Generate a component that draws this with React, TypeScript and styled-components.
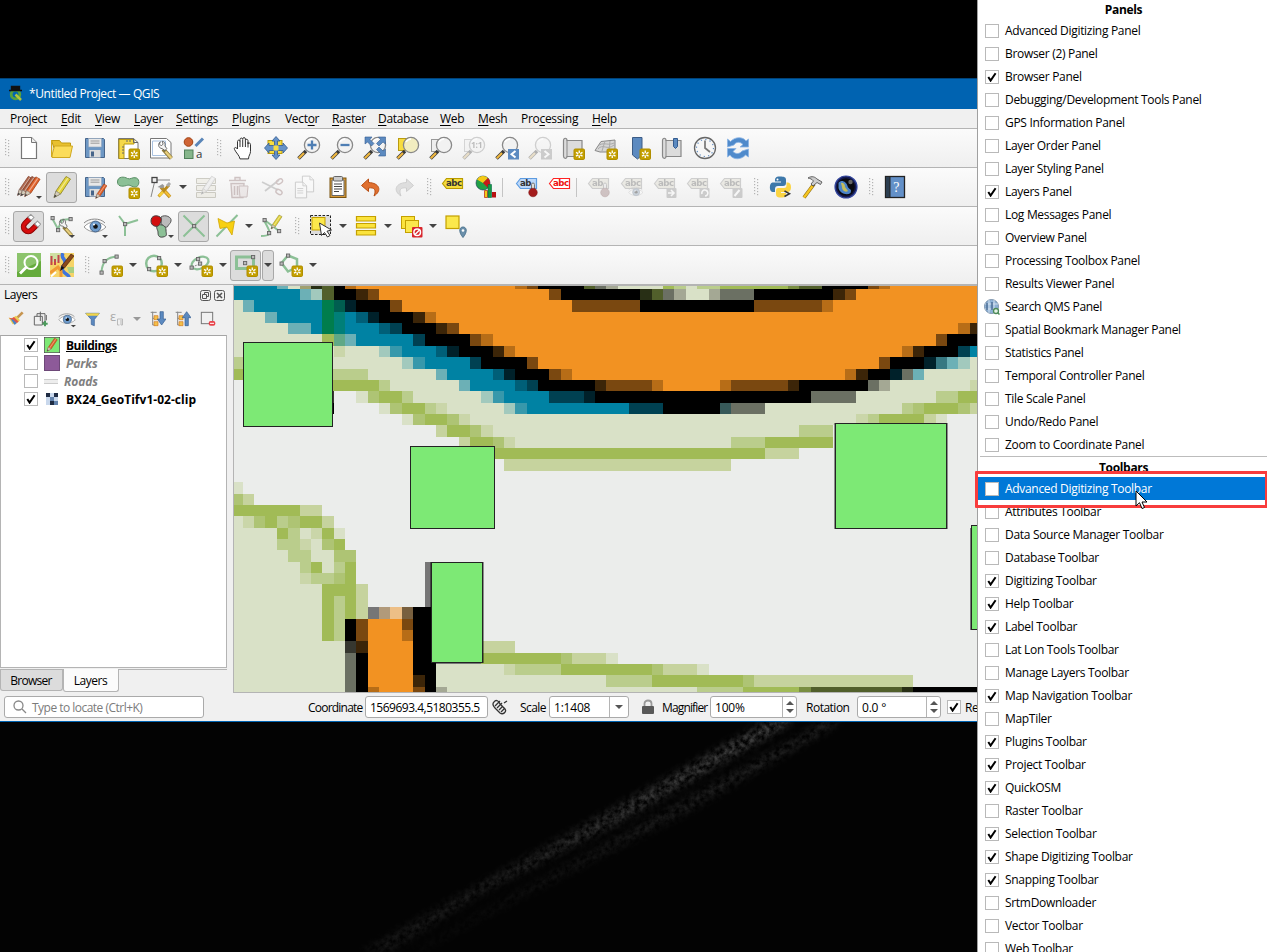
import React from "react";
import styled, { createGlobalStyle, css } from "styled-components";

const GlobalStyle = createGlobalStyle`
  * { box-sizing: border-box; }
  html, body { margin: 0; padding: 0; background: #000; overflow: hidden; }
  body { font-family: "Open Sans", "Noto Sans", sans-serif; font-size: 12px; letter-spacing: -0.31px; color: #000; }
  svg { display: block; flex: none; }
`;

/* ---------- layout ---------- */
const Desktop = styled.div`
  position: relative; width: 1267px; height: 952px; background: #000; overflow: hidden; padding-top: 78px;
`;
const Backdrop = styled.svg`position: absolute; left: 0; top: 721px;`;
const Window = styled.div`
  width: 1267px; height: 644px; background: #f0f0f0; display: flex; flex-direction: column;
  border-top: 1px solid #00437a; border-bottom: 1px solid #0063b1; position: relative;
`;
const TitleBar = styled.div`
  height: 30px; background: #0063b1; color: #fff; display: flex; align-items: center; padding: 0 0 2px 8px; gap: 6px; flex: none;
  letter-spacing: -0.4px;
`;
const MenuBar = styled.div`
  height: 19px; display: flex; align-items: center; padding-left: 10px; flex: none; background: #f0f0f0;
  u { text-underline-offset: 2px; text-decoration-thickness: 1px; }
`;
const MenuItem = styled.span<{ $w: number }>`width: ${p => p.$w}px; white-space: nowrap;`;
const ToolBar = styled.div`
  height: 39px; flex: none; border-top: 1px solid #b4b4b4; display: flex; align-items: center;
  background: linear-gradient(#fbfbfb, #efefef);
`;
const HandleBox = styled.div<{ $first?: boolean }>`
  width: ${p => (p.$first ? 12 : 16)}px; padding-left: ${p => (p.$first ? 5 : 7)}px; flex: none;
`;
const Slot = styled.div<{ $on?: boolean; $dim?: boolean }>`
  width: 31px; height: 31px; margin: 0 1px; flex: none; display: flex; align-items: center; justify-content: center;
  border: 1px solid transparent; border-radius: 3px; position: relative;
  ${p => p.$on && css`background: #dcdcdc; border-color: #a8a8a8;`}
  svg { ${p => p.$dim && css`opacity: 0.36; filter: saturate(0.5);`} }
`;
const Corner = styled.i`
  position: absolute; right: 1px; bottom: 3px; border: 3px solid transparent; border-top-color: #444; border-bottom: 0;
`;
const Arrow = styled.div<{ $on?: boolean }>`
  width: 12px; height: 31px; display: flex; align-items: center; justify-content: center; flex: none;
  border: 1px solid transparent; border-radius: 3px;
  ${p => p.$on && css`background: #dcdcdc; border-color: #a8a8a8;`}
  &::after { content: ""; border: 4px solid transparent; border-top-color: #444; border-bottom: 0; flex: none; }
`;
const Sep = styled.div<{ $w: number }>`width: ${p => p.$w}px; height: 19px; flex: none; border-left: 1px solid #c4c4c4;`;
const Main = styled.div`
  flex: 1; min-height: 0; display: flex; border-top: 1px solid #b4b4b4;
`;
const Dock = styled.div`width: 233px; display: flex; flex-direction: column; flex: none;`;
const DockTitle = styled.div`
  height: 20px; display: flex; align-items: center; padding: 0 8px 0 4px; gap: 3px;
  span { flex: 1; margin-top: -2px; letter-spacing: -0.5px; }
`;
const DockTools = styled.div`
  height: 30px; display: flex; align-items: center; padding: 0 0 2px 8px;
  svg { margin-right: 9px; }
`;
const Tree = styled.div`
  width: 227px; height: 333px; background: #fff; border: 1px solid #b4b4b4; border-top-color: #a5a5a5;
`;
const Layer = styled.div<{ $off?: boolean; $ls?: number }>`
  height: 18px; display: flex; align-items: center; padding-left: 23px; font-weight: 700; letter-spacing: ${p => p.$ls ?? -0.1}px;
  ${p => p.$off && css`color: #808080; font-style: italic;`}
`;
const Swatch = styled.span<{ $w: number }>`width: ${p => p.$w}px; margin-left: 6px; display: flex;`;
const Tabs = styled.div`
  width: 227px; height: 24px; margin-top: 1px; border-top: 1px solid #b4b4b4; display: flex; align-items: flex-start;
`;
const Tab = styled.div<{ $on?: boolean; $w: number }>`
  width: ${p => p.$w}px; height: ${p => (p.$on ? 23 : 21)}px; border: 1px solid #b4b4b4; border-top: 0;
  border-radius: 0 0 3px 3px; background: ${p => (p.$on ? "#fbfbfb" : "#dcdcdc")};
  display: flex; align-items: center; justify-content: center; margin-top: ${p => (p.$on ? -1 : 0)}px;
  padding-right: 1px; letter-spacing: ${p => (p.$on ? -0.5 : -0.75)}px;
`;
const MapBox = styled.div`flex: 1; border: 1px solid #b4b4b4; border-right: 0; border-top: 0; overflow: hidden; background: #ebedeb;`;
const Status = styled.div`
  height: 28px; flex: none; display: flex; align-items: center; padding: 0 0 0 4px;
`;
const Field = styled.div<{ $w: number; $muted?: boolean; $ls?: number }>`
  width: ${p => p.$w}px; height: 22px; background: #fff; border: 1px solid #aaa; border-radius: 3px; flex: none;
  display: flex; align-items: center; padding-left: ${p => (p.$muted ? 8 : 4)}px; gap: 5px;
  color: ${p => (p.$muted ? "#7b7b7b" : "#000")}; letter-spacing: ${p => p.$ls ?? -0.2}px; white-space: nowrap;
`;
const FieldEnd = styled.span<{ $w: number }>`
  margin-left: auto; width: ${p => p.$w}px; height: 20px; border-left: 1px solid #b4b4b4;
  display: flex; flex-direction: column; gap: 4px; align-items: center; justify-content: center;
  i { border: 4px solid transparent; }
  i.up { border-bottom-color: #555; border-top: 0; }
  i.dn { border-top-color: #555; border-bottom: 0; }
`;
const Label = styled.span<{ $w: number; $ml: number; $ls?: number }>`
  width: ${p => p.$w}px; margin-left: ${p => p.$ml}px; flex: none; white-space: nowrap; letter-spacing: ${p => p.$ls ?? -0.5}px;
`;

/* ---------- context menu ---------- */
const Menu = styled.div`
  position: absolute; left: 977px; top: 0; width: 290px; height: 952px; background: #fff; border-left: 1px solid #a0a0a0;
  overflow: hidden; display: flex; flex-direction: column;
`;
const MenuHead = styled.div<{ $sep?: boolean }>`
  height: ${p => (p.$sep ? 21 : 19)}px; flex: none; display: flex; align-items: center; justify-content: center;
  font-weight: 700; margin-left: 2px; ${p => p.$sep && css`border-top: 1px solid #bcbcbc;`}
`;
const MenuRow = styled.div<{ $on?: boolean }>`
  height: 23px; flex: none; display: flex; align-items: center; padding-left: 7px; gap: 6px; white-space: nowrap;
  ${p => p.$on && css`background: #0078d7; color: #fff;`}
`;
const Box = styled.span`
  width: 14px; height: 14px; border: 1px solid #b9b9b9; background: #fff; display: flex; align-items: center; justify-content: center; flex: none;
`;
const RedFrame = styled.div`
  position: absolute; left: 975px; top: 471px; width: 293px; height: 37px; border: 3px solid #f83c3c; border-radius: 1px;
`;
const Pointer = styled.svg`position: absolute; left: 1135px; top: 490px;`;

const Tick = () => (
  <svg width="10" height="10" viewBox="0 0 10 10"><path d="M1.3 5 3.6 8.6 8.6 1.2" fill="none" stroke="#000" strokeWidth="2" /></svg>
);
const Check = ({ on }: { on?: boolean }) => <Box>{on && <Tick />}</Box>;

/* ---------- icons ---------- */
const Ic = ({ children, s = 24 }: { children: React.ReactNode; s?: number }) => (
  <svg width={s} height={s} viewBox="0 0 24 24" fill="none">{children}</svg>
);
const New = ({ x = 12.5, y = 12.5 }: { x?: number; y?: number }) => (
  <g transform={`translate(${x} ${y})`}>
    <rect x=".5" y=".5" width="10.5" height="10.5" rx="1.2" fill="#c4a000" stroke="#b08e00" />
    <path d="M5.75 2v7.5M2.500 3.900l6.500 3.700M2.500 7.600l6.500-3.700" stroke="#fff" strokeWidth="1.300" />
    <circle cx="5.75" cy="5.75" r="1.2" fill="#c4a000" />
  </g>
);
const Lens = ({ fill = "#f2f2f2", cx = 15, cy = 9, r = 7.6 }: { fill?: string; cx?: number; cy?: number; r?: number }) => (
  <g>
    <path d="M1.5 22.5 9 15" stroke="#3a3a3a" strokeWidth="3.6" />
    <path d="M1.8 22.2 7 17" stroke="#f0b840" strokeWidth="2.2" />
    <circle cx={cx} cy={cy} r={r} fill={fill} stroke="#888" strokeWidth="1.3" />
    <path d="M10 6a6 6 0 0 1 5-3" stroke="#fff" strokeWidth="1.5" />
  </g>
);
const Nd = ({ x, y }: { x: number; y: number }) => (
  <rect x={x - 1.5} y={y - 1.5} width="3.2" height="3.2" fill="#bbb" stroke="#666" strokeWidth=".9" />
);
const Pencil = ({ c = "#e2d33a", d = "#8b8120", x = 0, y = 0, k = 1 }: { c?: string; d?: string; x?: number; y?: number; k?: number }) => (
  <g transform={`translate(${x} ${y}) scale(${k})`}>
    <path d="M4 22.5 6 16 16 1.5 20.5 4 10.5 19z" fill={c} stroke={d} strokeWidth=".8" />
    <path d="M8.2 17.3 18 3" stroke="#fff" strokeOpacity=".45" strokeWidth="1.3" />
    <path d="M4 22.5 6 16 10.5 19z" fill="#d5cdbb" stroke="#777" strokeWidth=".6" />
    <path d="M4 22.5 4.9 19.8 6.7 21z" fill="#333" />
  </g>
);
const Disk = () => (
  <g>
    <path d="M2.5 2.5h18l1 1v18h-19z" fill="#6d97c4" stroke="#47658a" />
    <rect x="5.5" y="2.5" width="13" height="8.5" fill="#e8e8e8" stroke="#8fa5bd" strokeWidth=".6" />
    <path d="M7.5 5h9M7.5 7.2h9" stroke="#999" />
    <rect x="6.5" y="14" width="11" height="7.5" fill="#ddd" />
    <rect x="8" y="15.5" width="3" height="5" fill="#47658a" />
  </g>
);
const Page = ({ x = 0, y = 0, k = 1, children }: { x?: number; y?: number; k?: number; children?: React.ReactNode }) => (
  <g transform={`translate(${x} ${y}) scale(${k})`}>
    <path d="M4.5 1.5h10l5 5v16h-15z" fill="#fff" stroke="#777" strokeWidth="1.2" />
    <path d="M14.5 1.5v5h5" fill="#eee" stroke="#777" />
    {children}
  </g>
);
const Tag = ({ t = "abc", f = "#f4dc3c", s = "#b99b00", c = "#333" }: { t?: string; f?: string; s?: string; c?: string }) => (
  <g>
    <path d="M1.5 8.5 5.500 3.500h16v10h-16z" fill={f} stroke={s} strokeWidth="1.2" />
    <text x="5" y="11.400" fontSize="8.6" fontWeight="700" fill={c} fontFamily="DejaVu Sans" letterSpacing="-.5">{t}</text>
  </g>
);
const Pin = ({ c = "#a41c1c" }: { c?: string }) => (
  <g><rect x="16.500" y="8" width="3" height="9" rx="1.5" fill="#ddd" stroke="#777" /><circle cx="18" cy="17.500" r="4.3" fill={c} stroke="#791414" strokeWidth=".5" /></g>
);
const Gray = ({ children }: { children: React.ReactNode }) => (
  <g><rect x="13.5" y="13" width="10" height="10" rx="1" fill="#888" />{children}</g>
);
const GEdge = "#8cc096";
const Eye = () => (
  <g>
    <path d="M1 13C6 6.5 17 6 23 13 17 19.500 7 19.500 1 13z" fill="#fff" stroke="#999" />
    <path d="M1 9C6 4 17 3.500 22 9" stroke="#888" />
    <circle cx="12.500" cy="12.500" r="5.400" fill="#6f9ccc" stroke="#47658a" />
    <circle cx="12.500" cy="12.500" r="2.300" fill="#111" /><circle cx="11" cy="10.500" r="1" fill="#fff" />
  </g>
);
const Wrench = () => (
  <g>
    <path d="m11 11 9 10" stroke="#8d7a3c" strokeWidth="4.400" /><path d="m13.500 13.500 6.500 7.300" stroke="#e8cf7c" strokeWidth="2.500" />
    <path d="M8 3C5 5 5.500 10 10 10.500l3 2 2-2-2-3c1-3-1-5-3-5l1 3-2 2-2-2z" fill="#f4f4f4" stroke="#555" strokeWidth=".9" />
  </g>
);

const icons: Record<string, React.ReactNode> = {
  page: <Page />,
  folder: <g><path d="M1.500 4.500h8l2 2.500h9v5H4z" fill="#e8c02e" stroke="#c09a10" /><path d="M1.500 4.500V21l3-11h18L20 21.500H2z" fill="#fbdc5a" stroke="#d0a820" /></g>,
  disk: <Disk />,
  layout: <g><path d="M2.500 2.500h15l4.500 4v16h-19.500z" fill="#fff" stroke="#777" /><path d="M3 3.500h15v4.500h-10v14.500h-5z" fill="#f5d84a" stroke="#b99a10" /><path d="M17.500 2.500v4H22M6 11h2M6 14h2M6 17h2M11 4v2M14 4v2" stroke="#666" /><New /></g>,
  layoutmgr: <g><path d="M1.500 2.500h16l4.500 4v15.500H1.500z" fill="#fff" stroke="#777" /><path d="M3.500 5h13v14.500h-13z" stroke="#a9c2e0" /><g transform="translate(4 3) scale(.92)"><Wrench /></g></g>,
  style: <g><circle cx="6.500" cy="6" r="4.300" fill="#cf6434" stroke="#a04010" /><path d="M13.500 10 21 2.500" stroke="#5a86b8" strokeWidth="3" /><rect x="2.500" y="14" width="8.500" height="8.500" fill="#86b68b" stroke="#50805a" /><text x="14" y="21.500" fontSize="11.500" fill="#333" fontFamily="Open Sans">a</text></g>,
  hand: <path d="M6.500 13V5.500c0-1.800 2.300-1.800 2.500 0V3.500c0-1.900 2.700-1.900 2.700 0V3c0-1.900 2.700-1.900 2.700 0v1.500c.2-1.700 2.500-1.600 2.600.2V8c.4-1.500 2.500-1.200 2.500.4v7c0 3-2 4-2 7.500H9c-.5-3.500-4-6-5.500-9.500-.8-2 1.500-2.600 3-.4zM9 5.500V11M11.700 4v7M14.400 4.500V11M17 6v5.500" fill="#fff" stroke="#333" strokeWidth="1" />,
  pan: <g><rect x="4" y="4.500" width="14" height="13" fill="#f7dc3f" stroke="#b99b10" /><path d="m12 .5 4 4.500h-2.500v4.500H19V7l4.500 5-4.500 5v-2.500h-5.500V19H16l-4 4.500L8 19h2.500v-4.500H5V17L.5 12 5 7v2.500h5.500V5H8z" fill="#6592c8" stroke="#345c90" strokeWidth=".8" /><rect x="9.500" y="9.500" width="5" height="5" fill="#f7dc3f" /></g>,
  zoomin: <g><Lens /><path d="M15 4.500v9M10.500 9h9" stroke="#4e7eb4" strokeWidth="2.300" /></g>,
  zoomout: <g><Lens /><path d="M10.500 9h9" stroke="#4e7eb4" strokeWidth="2.300" /></g>,
  zoomfull: <g><Lens /><path d="M2 1h7L7 3.500l4 4L8.500 10l-4-4L2 8zM22.500 1h-7l2 2.500-4 4L16 10l4-4 2.500 2zM22.500 20h-7l2-2.500-4-4L16 11l4 4 2.500-2z" fill="#5c8ac0" stroke="#345c90" strokeWidth=".6" /></g>,
  zoomsel: <g><rect x="2.500" y="2.500" width="13" height="12" fill="#f7dc3f" stroke="#b99b10" /><Lens fill="#f2edc0" /></g>,
  zoomlayer: <g><rect x="2.500" y="3.500" width="12" height="12" fill="#eee" stroke="#999" /><Lens /></g>,
  zoom11: <g><rect x="2.500" y="3.500" width="12" height="12" fill="#eee" stroke="#999" /><Lens /><text x="9" y="12" fontSize="8.500" fontWeight="700" fill="#555" fontFamily="Open Sans">1:1</text></g>,
  zoomlast: <g><Lens /><rect x="13" y="13" width="11" height="10.500" fill="#5c8ac0" /><path d="m20.500 15-4 3.300 4 3.300" stroke="#fff" strokeWidth="2" /></g>,
  zoomnext: <g><Lens /><rect x="13" y="13" width="11" height="10.500" fill="#888" /><path d="m16.500 15 4 3.300-4 3.300" stroke="#fff" strokeWidth="2" /></g>,
  mapview: <g><path d="M2.500 20V4.500c0-3 3.500-3 3.500 0h15v16H6c0 2.500-3.500 2.500-3.500-.5z" fill="#dcdcdc" stroke="#888" strokeWidth="1.200" /><path d="M6 4.500v16" stroke="#888" /><New /></g>,
  view3d: <g><path d="M1 14.500 7 5.500l14-1.500v9l-3 3H6z" fill="#d6d6d6" stroke="#888" /><path d="M4 13c5-6 9 2 16-4M5 9c6-3 9 1 15-2M11 5 8 15M16 5l-1 10" stroke="#aaa" /><New /></g>,
  newbm: <g><path d="M5.500 1.500h9.500v17.500l-4.500 4-5-4z" fill="#5c8ac0" stroke="#3c5c86" /><New /></g>,
  showbm: <g><path d="M2.500 20V4.500c0-3 3.500-3 3.500 0h15v16H6c0 2.500-3.500 2.500-3.500-.5z" fill="#dcdcdc" stroke="#888" strokeWidth="1.200" /><path d="M6 4.500v16" stroke="#888" /><path d="M13.500 2.500h4v8l-2 2-2-2z" fill="#5c8ac0" stroke="#345c90" /></g>,
  clock: <g><circle cx="12" cy="12" r="10.500" fill="#f6f6f6" stroke="#666" strokeWidth="1.300" /><circle cx="12" cy="12" r="8.500" stroke="#5c8ac0" strokeWidth="1.200" strokeDasharray="1.200 3.250" /><path d="M12 4.500V12l5 4" stroke="#777" strokeWidth="1.700" /></g>,
  refresh: <g><path d="M1.500 11V3l3 2.500C9 .5 17 .5 20 5l2.500-2v8H14l3-2.500c-3-3-7-3-9 .5zM22.500 13v8l-3-2C15 24 7 24 4 19l-2.500 2v-8.500H10l-3 3c3 3 7 2.500 9-.5z" fill="#4f8acb" stroke="#8ab4e4" strokeWidth=".8" /></g>,
  pencils: <g><Pencil c="#b06a50" d="#80402c" x={-3} y={0} k={0.9} /><Pencil c="#a85c40" d="#7a3c28" x={0} k={0.93} /><Pencil c="#e0622c" d="#a03c10" x={4} y={0.5} k={0.93} /></g>,
  pencil: <Pencil />,
  savepen: <g><Disk /><Pencil c="#e0622c" d="#a03c10" x={10} y={8} k={0.68} /></g>,
  addpoly: <g><path d="M1.500 7c0-6 7-5.500 10-3.500 3 1.500 5-2 9-.5 3.500 1.500 3 8.500-1 9-4 .3-5-3-9-1.500-5 1.500-9 .5-9-3.500z" fill="#8cc096" stroke="#5a8f66" /><New /></g>,
  vertex: <g><path d="M2 22 6 5h15" stroke="#888" /><rect x="3" y="2.500" width="5" height="5" fill="#eee" stroke="#444" strokeWidth="1.300" /><path d="m12 12 9 10" stroke="#b98a1c" strokeWidth="3.400" /><path d="m14 14.500 7 7" stroke="#f3bd35" strokeWidth="2.200" /><path d="M9.500 21.500 20 10" stroke="#b98a1c" strokeWidth="2.800" /><path d="m10 21 4-4" stroke="#f6cf3c" strokeWidth="2.600" /><path d="m8.500 12 5-3 2 2-2 2.500z" fill="#999" /><path d="m18 11 3-3" stroke="#aaa" strokeWidth="3" /></g>,
  modify: <g><path d="M2.500 3.500h19v5h-19zM2.500 10.500h19v5h-19zM2.500 17.500h19v5h-19z" fill="#e9e3c4" stroke="#8a8457" /><Pencil c="#ddd" d="#777" x={4} k={0.85} /></g>,
  trash: <g><path d="M2 5.500h17M8 5V2.500h5V5M4 8.500h13l-1 14H5zM7.500 11v9M10.500 11v9M13.500 11v9" stroke="#a06060" strokeWidth="1.400" fill="#ecd4d4" /><path d="M12 11h9l-1 11h-7z" fill="#e8d0d0" stroke="#a06060" /></g>,
  cut: <g><path d="m2 7 16 8M5 16 19 5" stroke="#888" strokeWidth="1.800" /><ellipse cx="19.500" cy="6.500" rx="3.300" ry="2.200" stroke="#a66" strokeWidth="1.400" transform="rotate(-30 19.500 6.500)" /><ellipse cx="19" cy="17" rx="3.300" ry="2.200" stroke="#a66" strokeWidth="1.400" transform="rotate(30 19 17)" /></g>,
  copy: <g><Page x={6} y={0} k={0.75} /><Page x={-1} y={6} k={0.75}><path d="M7 10h8M7 13h8M7 16h8" stroke="#777" /></Page></g>,
  paste: <g><rect x="4" y="3" width="16" height="19.500" fill="#d79a3a" stroke="#7a5410" /><path d="M6 5h12v15.500H6z" fill="#fff" stroke="#666" /><rect x="7.500" y="1.500" width="9" height="4.500" rx="1" fill="#ccc" stroke="#666" /><path d="M8 9h8M8 11.500h8M8 14h8M8 16.500h5" stroke="#444" /></g>,
  undo: <path d="M9.500 4 2.500 10.500l7 6V13c6-1 8 2 5.500 8 8-5 6-13-5.500-13.500z" fill="#e07030" stroke="#b84e14" />,
  redo: <path d="M14.500 4 21.500 10.500l-7 6V13c-6-1-8 2-5.500 8-8-5-6-13 5.500-13.500z" fill="#b5b5b5" stroke="#888" />,
  label: <Tag />,
  diagram: <g><circle cx="9" cy="8" r="7" fill="#21a046" stroke="#135" strokeWidth=".6" /><path d="M9 8 3 4.500A7 7 0 0 1 14 3z" fill="#f6c915" /><path d="M9 8l5-5a7 7 0 0 1 0 10z" fill="#c8181a" /><path d="M10.500 15.500h3v7h-3z" fill="#f6c915" stroke="#a00" strokeWidth=".6" /><path d="M14 9.500h3.500v13H14z" fill="#159a45" stroke="#064" strokeWidth=".6" /><path d="M18 17h4v5.500h-4z" fill="#b81212" /></g>,
  labpin: <g><Tag t="ab" f="#bcd8fb" s="#5c9be0" /><Pin /></g>,
  labred: <Tag f="#fff" s="#f22" c="#e11" />,
  gpin: <g><Tag t="ab" f="#d8d4b4" s="#888" c="#555" /><Pin c="#a66" /></g>,
  geye: <g><Tag f="#d8d4b4" s="#888" c="#555" /><g transform="translate(8 9) scale(.65)"><Eye /></g></g>,
  gmove: <g><Tag f="#d8d4b4" s="#888" c="#555" /><Gray><path d="M15 18h6m-3-3 3 3-3 3" stroke="#fff" strokeWidth="1.600" /></Gray></g>,
  grot: <g><Tag f="#d8d4b4" s="#888" c="#555" /><Gray><path d="M16 19a3 3 0 1 1 3 2" stroke="#fff" strokeWidth="1.600" /></Gray></g>,
  gedit: <g><Tag f="#d8d4b4" s="#888" c="#555" /><Gray><path d="m15.500 21 5-6" stroke="#fff" strokeWidth="2" /></Gray></g>,
  python: <g><path d="M12 1.500c-5 0-5 2-5 5h6v1H4.500C1 7.500 1 17 4.500 17H7v-3c0-2 1-3 3-3h5c2 0 3-1 3-3V5c0-3-2-3.500-6-3.500z" fill="#3d78aa" /><path d="M18.500 7.500H20c4 0 4 9.500 0 9.500h-7v1h5c0 4-1 4.500-5 4.500-5 0-5-2-5-4.500 0-4 0-5 3-5h5c2 0 2.500-1 2.500-3z" fill="#fbd443" /><circle cx="9.500" cy="4.500" r="1" fill="#fff" /><path d="m16.500 16 5 2.700-5 2.800" stroke="#333" strokeWidth="1.500" /></g>,
  hammer: <g><path d="M3 22.500 13 9" stroke="#8b6a10" strokeWidth="3.600" /><path d="M3 22.500 11.500 11" stroke="#f5c521" strokeWidth="2.400" /><path d="M7 3c4-2.500 7-1 9 1l5 3-1.500 2.500-3.500-2-4 3.500-2-2 2.500-3C11 4 9 3.500 7 3z" fill="#ccc" stroke="#555" strokeWidth=".9" /></g>,
  globe: <g><circle cx="12" cy="12" r="11" fill="#141a50" stroke="#34479e" strokeWidth="1.200" /><circle cx="12" cy="12" r="8.800" fill="#0a0a10" /><path d="M4.500 8c3-4 8-1 9 3s5 2 3 7c-4 3-11 0-12-5z" fill="#4b83c8" /><path d="M7 8c3-1 4 2 4 4l3 4c-3 2-6-1-6-4z" fill="#c4bd5c" /><circle cx="16.500" cy="7" r="2.200" fill="#666" /></g>,
  help: <g><rect x="2.500" y="1.500" width="19" height="21" fill="#6390c8" stroke="#222" strokeWidth="1.300" /><path d="M2.500 1.500H7v21H2.500z" fill="#2c3e50" stroke="#222" /><text x="10.200" y="17" fontSize="14" fill="#fff" fontFamily="Liberation Serif">?</text></g>,
  magnet: <g transform="rotate(45 12 12)"><path d="M5 6v7a7 7 0 0 0 14 0V6h-4.500v7a2.500 2.500 0 0 1-5 0V6z" fill="#d60c0c" stroke="#8e0404" /><path d="M5 2.500h4.500v4H5zM14.500 2.500H19v4h-4.500z" fill="#fff" stroke="#999" /></g>,
  snaptool: <g><path d="M2 4 8 15 12 6 21 5" stroke={GEdge} strokeWidth="2" /><Nd x={2.500} y={4} /><Nd x={8} y={16} /><Nd x={20.500} y={5} /><g transform="translate(4 3) scale(.88)"><Wrench /></g></g>,
  eye: <Eye />,
  topo: <g><path d="M3 2 9 10 22 6M9 10v12" stroke={GEdge} strokeWidth="2" /><Nd x={9} y={10} /></g>,
  overlap: <g><path d="M12 3c4-3 11 0 10 4s-2 2-3 5-7 0-7-4z" fill="#bbb" stroke="#555" /><path d="M9 11c4-1 8 1 8 5s2 6-3 7-5-3-5-5-3-5 0-7z" fill="#8cc096" stroke="#444" /><path d="M2 7c0-6 6-6 9-4s0 8-2 9-7 0-7-5z" fill="#d20e0e" stroke="#444" /></g>,
  cross: <g><path d="M1.500 1.500 22.500 22.500M22.500 1.500 1.500 22.500" stroke={GEdge} strokeWidth="2" /><Nd x={12} y={12} /></g>,
  trace: <g><path d="M22.500 1 1.500 22.500" stroke={GEdge} strokeWidth="2" /><path d="m3 4.500 9 4.500 7.500-2-2.500 14-5-8-7 1.500z" fill="#f7d012" stroke="#d0a400" strokeWidth=".8" /></g>,
  tracepen: <g><path d="M1 22c9 0 10-2 7-8S3.500 6 4.500 6L19 17" stroke={GEdge} strokeWidth="2" /><Nd x={4.500} y={6} /><Nd x={19} y={17} /><Nd x={9} y={19} /><Pencil x={8.500} y={0} k={0.66} /></g>,
  selrect: <g><rect x="1.500" y="1.500" width="20" height="19" fill="#ddd" stroke="#222" strokeDasharray="2.500 1.500" /><rect x="3" y="3.500" width="13" height="12.500" fill="#fbe84c" stroke="#c4a000" /><path d="m10.500 9 12 7-4.500 1.200 3 4.300-2.500 1.500-3-4.500-3 3z" fill="#fff" stroke="#333" /></g>,
  seltable: <path d="M2.500 2.500h19v4.500h-19zM2.500 9.500h19V14h-19zM2.500 16.500h19V21h-19z" fill="#fbe33c" stroke="#c4a000" strokeWidth="1.200" />,
  desel: <g><rect x="2.500" y="2.500" width="13" height="12" fill="#fbe33c" stroke="#c4a000" /><rect x="6.500" y="6.500" width="13" height="12" fill="#fbe84c" stroke="#c4a000" /><rect x="13" y="13" width="10.500" height="10.500" rx="1" fill="#d8262c" /><circle cx="18.200" cy="18.200" r="3.300" stroke="#fff" strokeWidth="1.500" /><path d="m16 20.500 4.500-4.500" stroke="#fff" strokeWidth="1.500" /></g>,
  selloc: <g><rect x="2" y="2" width="13" height="12.500" fill="#fbe84c" stroke="#c4a000" strokeWidth="1.200" /><path d="M19 23.500c-5-6-3.500-10.500 0-10.500s5 4.500 0 10.500z" fill="#6b90ab" stroke="#4d7590" /><circle cx="19" cy="16.500" r="1.300" fill="#fff" /></g>,
  qosm: <g><rect width="24" height="24" fill="#65ab3c" /><path d="M0 0h24v8L0 19z" fill="#8cc46c" /><circle cx="14" cy="9.500" r="6.500" stroke="#fff" strokeWidth="2" /><path d="M9.500 14 3 20.500" stroke="#fff" strokeWidth="2.800" /></g>,
  osmedit: <g><rect width="24" height="24" fill="#f6d468" /><path d="M0 0h10v9H0z" fill="#cfe0a2" /><path d="M13 0c-3 5 3 6 2 10s-5 4-2 8 6 4 6 6" stroke="#3f74dc" strokeWidth="3.500" /><path d="M1.500 3v9M5 6v6M8.500 2v8" stroke="#c2464a" strokeWidth="2" /><path d="m0 20 8-6 3 4v6" stroke="#f09a34" strokeWidth="3" /><path d="M1 23.500 6 19" stroke="#fff" strokeWidth="2" /><path d="M17 14h7v6h-5z" fill="#a9cf80" /><path d="m11.500 13 9.500-12 3 2-9.500 12z" fill="#8a4a1c" stroke="#4c2408" strokeWidth=".7" /><path d="m11.500 13 3 2-4.500 3z" fill="#111" /></g>,
  arc: <g><path d="M2.500 19C3 10 8 4 18 3.500" stroke={GEdge} strokeWidth="2" /><Nd x={2.500} y={19.500} /><Nd x={5.500} y={8} /><Nd x={17.500} y={3.500} /><New /></g>,
  circ: <g><circle cx="10" cy="10.500" r="7.800" stroke={GEdge} strokeWidth="2.500" /><Nd x={15} y={5} /><Nd x={5} y={16} /><New /></g>,
  ellip: <g><ellipse cx="11" cy="10" rx="9" ry="5.500" stroke={GEdge} strokeWidth="2.300" transform="rotate(-25 11 10)" /><path d="m3 14 8-3-2-6" stroke="#888" strokeDasharray="2 1" /><Nd x={2.500} y={14.500} /><Nd x={11} y={10.500} /><Nd x={9} y={6} /><New /></g>,
  rect: <g><rect x="2.500" y="4" width="17" height="11.500" stroke={GEdge} strokeWidth="3" /><Nd x={11} y={10} /><Nd x={19} y={4} /><New /></g>,
  polyg: <g><path d="M9 2.500 18 6v8l-9 4.500L2.500 10z" stroke={GEdge} strokeWidth="2.500" /><Nd x={9} y={2.500} /><Nd x={2.500} y={10.500} /><New /></g>,
};

const B = ({ n, on, dim, dd }: { n: string; on?: boolean; dim?: boolean; dd?: boolean }) => (
  <Slot $on={on} $dim={dim}><Ic>{icons[n]}</Ic>{dd && <Corner />}</Slot>
);
const H = ({ first }: { first?: boolean }) => (
  <HandleBox $first={first}>
    <svg width="6" height="18"><g fill="#b4b4b4">{[0, 3, 6, 9, 12, 15].map(y => <g key={y}><rect y={y} width="1.200" height="1.200" /><rect x="3" y={y + 1} width="1.200" height="1.200" /></g>)}</g></svg>
  </HandleBox>
);

/* ---------- raster map ---------- */
const palette: Record<string, string> = {
  T: "#0082a3", K: "#000", O: "#f29222", G: "#d9e1c7", D: "#a1bb56", W: "#ebedeb", B: "#7a4810", b: "#3c2508", o: "#b76d17",
  M: "#bacd8c", N: "#c6d39e", m: "#aec474", g: "#cad6a9", S: "#6cb0b6", s: "#a2c9bd", t: "#3798ab", U: "#005f78", u: "#004152",
  v: "#00212a", H: "#007d4c", h: "#005e50", Q: "#007f78", q: "#60a886", R: "#6b7063", r: "#a4a894", E: "#515f2b", e: "#282f15",
  F: "#798e41", f: "#a0a070", p: "#377882", y: "#375959", x: "#767676", a: "#b19a7a", c: "#edbf86", d: "#78603f", j: "#36372f",
};
// Each row lists a colour key followed by the column at which its run ends.
const raster = [
  "T3 S4 G5 f6 e7 E8 K9 o10 O24 o25 B26 K30 E31 R32 r33 G37 D38 M39 G40 M42 D48 F49 E51 K55 B56 o57 O66",
  "T5 S6 s7 E8 K10 b11 B12 O27 B28 K35 e36 E37 R38 r39 G41 r42 R45 K52 b53 B54 O66",
  "G0 S1 T7 H8 h9 v10 K13 B14 O29 B35 K45 B51 o52 O66",
  "G2 S3 T7 H8 Q9 T10 U11 v12 K15 b16 o17 O66",
  "G4 S6 T7 H8 Q9 T12 U13 u14 K17 b18 B19 O63 o64 b66",
  "G7 D8 q9 S10 T15 u16 K20 B21 o22 O61 B62 K66",
  "G8 g9 G12 s13 t14 T17 U18 v19 K22 b23 o24 O58 o59 b60 K63 u64 T66",
  "M0 G14 s15 t16 T20 u21 K25 B26 O56 B57 K60 v61 p62 S63 s64 G66",
  "D0 M11 G17 S18 T22 U23 v24 K27 B28 o29 O53 o54 b55 K57 v58 R59 S60 G66",
  "W0 D12 M13 G19 S20 T24 U25 u26 K31 b32 B36 o37 O42 o43 B48 b49 K55 R56 r57 G64 g66",
  "W10 G11 m12 D14 M15 G21 s22 t23 T27 u30 v31 K50 R54 G61 M63 D66",
  "W12 G13 m14 D16 M17 g18 G23 s24 t25 T34 u37 K42 y43 R46 G58 M59 m60 D63 m64 N66",
  "W14 G15 m16 D18 m19 g20 G54 g55 M56 D60 N61 G62 W66",
  "W17 N18 D20 m21 g22 G49 M52 W66",
  "W19 N20 D22 m23 g24 G43 M46 D52 W66",
  "W22 D46 N49 W66",
  "W23 N43 W66",
  "W66",
  "G0 W66",
  "m0 N1 W66",
  "D5 N7 W66",
  "G0 g1 m2 D3 M4 m5 D7 N8 W66",
  "G3 D4 M5 G6 g7 D8 G9 W66",
  "G3 M5 g6 G7 m8 D9 W66",
  "G4 M6 G8 m10 W66",
  "G5 M6 D7 G8 M9 D10 W16 x17 W66",
  "G5 g6 M8 m9 D10 W16 x17 W66",
  "G7 D10 N11 W16 x17 W66",
  "G7 D8 M9 D10 N11 W16 x17 W66",
  "G7 D8 M9 D10 N11 x12 a13 c14 d15 K17 W66",
  "G7 D8 M9 K10 B11 O14 B15 K17 W66",
  "G7 D8 M9 K10 B11 O14 o15 K17 W66",
  "G9 j10 b11 O15 K17 N24 W66",
  "G9 R10 K11 O15 K17 D28 m29 N32 G33 W66",
  "G9 R10 K11 O15 K17 G23 g24 M28 D36 m37 N40 G41 W66",
  "G9 R10 K11 O15 b16 K17 G32 M36 D44 m45 N59 W66",
  "G9 R10 K11 o12 O15 B16 K17 r18 G40 M44 D49 F50 E58 e59 K66",
];
const rowTop = [286, 289, 300, 312, 323, 334, 346, 357, 369, 380, 391, 403, 414, 425, 437, 448, 459, 471, 482, 494, 505, 516, 528, 539, 550, 562, 573, 584, 596, 607, 619, 630, 641, 653, 664, 675, 687, 692];
const colX = (c: number) => (c < 0 ? 234 : Math.round(242.75 + 11.36 * c));

const RasterMap = () => (
  <svg width="760" height="407" viewBox="234 285 760 407" shapeRendering="crispEdges">
    <rect x="234" y="285" width="760" height="1" fill="#b4b4b4" />
    {raster.map((line, r) => {
      let c = -1;
      return line.split(" ").map((run, i) => {
        const end = parseInt(run.slice(1), 10);
        const x = colX(c);
        c = end;
        return <rect key={`${r}-${i}`} x={x} y={rowTop[r]} width={colX(end) - x} height={rowTop[r + 1] - rowTop[r]} fill={palette[run[0]]} />;
      });
    })}
    <path d="M333.500 391v12" stroke="#3a3a30" />
    <path d="M333.500 403v11" stroke="#000" />
    <path d="M970.500 528v102M436 663.500h45" stroke="#777" />
    {[[243, 342, 90, 85], [410, 446, 85, 83], [835, 423, 112, 106], [431, 562, 52, 101], [971, 525, 60, 105]].map(([x, y, w, h]) => (
      <rect key={x} x={x + 0.5} y={y + 0.5} width={w - 1} height={h - 1} fill="#7de975" stroke="#232323" />
    ))}
    <path d="M834.500 423v106M947.500 423v106M483.500 562v101M430.500 562v101" stroke="#000" strokeOpacity=".4" />
  </svg>
);

/* ---------- data ---------- */
const menus: [string, string, string, number][] = [
  ["Pro", "j", "ect", 51], ["", "E", "dit", 34], ["", "V", "iew", 39], ["", "L", "ayer", 42], ["", "S", "ettings", 56], ["", "P", "lugins", 53],
  ["Vect", "o", "r", 47], ["", "R", "aster", 46], ["", "D", "atabase", 62], ["", "W", "eb", 38], ["", "M", "esh", 43], ["Pro", "c", "essing", 71], ["", "H", "elp", 40],
];
const panels = ["Advanced Digitizing Panel", "Browser (2) Panel", "+Browser Panel", "Debugging/Development Tools Panel", "GPS Information Panel", "Layer Order Panel", "Layer Styling Panel", "+Layers Panel", "Log Messages Panel", "Overview Panel", "Processing Toolbox Panel", "Results Viewer Panel", "@Search QMS Panel", "Spatial Bookmark Manager Panel", "Statistics Panel", "Temporal Controller Panel", "Tile Scale Panel", "Undo/Redo Panel", "Zoom to Coordinate Panel"];
const toolbars = ["*Advanced Digitizing Toolbar", "Attributes Toolbar", "Data Source Manager Toolbar", "Database Toolbar", "+Digitizing Toolbar", "+Help Toolbar", "+Label Toolbar", "Lat Lon Tools Toolbar", "Manage Layers Toolbar", "+Map Navigation Toolbar", "MapTiler", "+Plugins Toolbar", "+Project Toolbar", "+QuickOSM", "Raster Toolbar", "+Selection Toolbar", "+Shape Digitizing Toolbar", "+Snapping Toolbar", "SrtmDownloader", "Vector Toolbar", "Web Toolbar"];

const QmsSvg = styled.svg`margin: 0 -1px;`;
const QmsIcon = () => (
  <QmsSvg width="16" height="16" viewBox="0 0 16 16">
    <circle cx="7.500" cy="7.500" r="7" fill="#8fb2d6" stroke="#667f99" strokeWidth=".8" />
    <path d="M5 1v13M10 1v13M1 5h13M1 10h13" stroke="#dfe9f3" strokeWidth=".8" /><path d="M3 4v7M8 3v8" stroke="#4d6f96" strokeWidth="1.500" />
    <circle cx="12" cy="12" r="2.500" fill="#e6f3e6" stroke="#4c8a58" strokeWidth="1.300" /><path d="m13.500 13.500 2 2" stroke="#4c8a58" strokeWidth="1.500" />
  </QmsSvg>
);
const Entry = ({ text }: { text: string }) => {
  const flag = "+@*".includes(text[0]) ? text[0] : "";
  return (
    <MenuRow $on={flag === "*"}>
      {flag === "@" ? <QmsIcon /> : <Check on={flag === "+"} />}
      <span>{flag ? text.slice(1) : text}</span>
    </MenuRow>
  );
};

const StatusIcon = styled.svg<{ $ml: number }>`margin-left: ${p => p.$ml}px;`;

export default function App() {
  return (
    <Desktop>
      <GlobalStyle />
      <Backdrop width="977" height="231" viewBox="0 721 977 231">
        <defs>
          <filter id="grain" x="-10%" y="-10%" width="120%" height="120%">
            <feGaussianBlur stdDeviation="4" result="soft" />
            <feTurbulence type="fractalNoise" baseFrequency=".2" numOctaves="3" seed="4" />
            <feColorMatrix values="0 0 0 0 .45 0 0 0 0 .45 0 0 0 0 .45 2 0 0 0 -.5" />
            <feComposite in2="soft" operator="in" />
          </filter>
          <linearGradient id="fade" x1="1" y1="0" x2="0" y2="1"><stop stopColor="#fff" stopOpacity=".42" /><stop offset="1" stopColor="#fff" stopOpacity=".1" /></linearGradient>
        </defs>
        <rect y="721" width="977" height="231" fill="#030303" />
        <g filter="url(#grain)" fill="url(#fade)">
          <path d="M768 721h26L620 822 480 894 390 952h-30l110-62z" />
          <path d="M826 721h16L680 816 520 898l-100 54h-8l102-58z" opacity=".55" />
        </g>
      </Backdrop>
      <Window>
        <TitleBar>
          <svg width="15" height="16" viewBox="0 0 15 16" fill="none"><circle cx="7.500" cy="9.500" r="4.300" stroke="#58a13c" strokeWidth="2.800" /><path d="m7.500 9.500 5.500 5.500" stroke="#b3c639" strokeWidth="2.500" /><path d="M1 5.500h13M3.500 5V1.500h8V5" fill="#111" stroke="#111" strokeWidth="1.400" /></svg>
          <span>*Untitled Project — QGIS</span>
        </TitleBar>
        <MenuBar>{menus.map(([a, u, z, w]) => <MenuItem key={a + u + z} $w={w}>{a}<u>{u}</u>{z}</MenuItem>)}</MenuBar>
        <ToolBar>
          <H first />{["page", "folder", "disk", "layout", "layoutmgr", "style"].map(n => <B key={n} n={n} />)}
          <H />{["hand", "pan", "zoomin", "zoomout", "zoomfull", "zoomsel", "zoomlayer"].map(n => <B key={n} n={n} />)}
          <B n="zoom11" dim /><B n="zoomlast" /><B n="zoomnext" dim />
          {["mapview", "view3d", "newbm", "showbm", "clock", "refresh"].map(n => <B key={n} n={n} />)}
        </ToolBar>
        <ToolBar>
          <H first /><B n="pencils" dd /><B n="pencil" on /><B n="savepen" /><B n="addpoly" /><B n="vertex" /><Arrow />
          <B n="modify" dim /><B n="trash" dim /><B n="cut" dim /><B n="copy" dim /><B n="paste" /><B n="undo" /><B n="redo" dim />
          <H /><B n="label" /><B n="diagram" /><Sep $w={8} /><B n="labpin" /><B n="labred" /><Sep $w={6} />
          {["gpin", "geye", "gmove", "grot", "gedit"].map(n => <B key={n} n={n} dim />)}
          <H /><B n="python" /><B n="hammer" /><B n="globe" /><H /><B n="help" />
        </ToolBar>
        <ToolBar>
          <H first /><B n="magnet" on /><B n="snaptool" dd /><B n="eye" dd /><B n="topo" /><B n="overlap" dd /><B n="cross" on /><B n="trace" /><Arrow /><B n="tracepen" />
          <H /><B n="selrect" /><Arrow /><B n="seltable" /><Arrow /><B n="desel" /><Arrow /><B n="selloc" />
        </ToolBar>
        <ToolBar>
          <H first /><B n="qosm" /><B n="osmedit" /><H /><B n="arc" /><Arrow /><B n="circ" /><Arrow /><B n="ellip" /><Arrow /><B n="rect" on /><Arrow $on /><B n="polyg" /><Arrow />
        </ToolBar>
        <Main>
          <Dock>
            <DockTitle>
              <span>Layers</span>
              <svg width="11" height="11" fill="none" stroke="#555"><rect x=".5" y=".5" width="10" height="10" rx="2" /><path d="M4.500 4.500v-2h4v4h-2M2.500 4.500h4v4h-4z" /></svg>
              <svg width="11" height="11" fill="none" stroke="#555"><rect x=".5" y=".5" width="10" height="10" rx="2" /><path d="m3 3 5 5m0-5-5 5" strokeWidth="1.600" /></svg>
            </DockTitle>
            <DockTools>
              <Ic s={16}><path d="m14 10 8-8" stroke="#c79550" strokeWidth="4" /><path d="m1 10 5 1 6-4 6 7-6 5-5 1z" fill="#ecd050" /><path d="m1 10 5 1 3-2 7 7-3 2z" fill="#e05548" /><path d="m4 12 4 1 5 5-3 3z" fill="#4a80c8" /></Ic>
              <Ic s={16}><path d="M2 8h12v13H2zM6 8V4h12v13h-4M11 1v14M20 6v8" stroke="#666" strokeWidth="1.500" /><path d="M18 15v8M14 19h8" stroke="#4c9a5c" strokeWidth="3" /></Ic>
              <Ic s={18}><Eye /><path d="M17 20h7l-3.500 3z" fill="#444" /></Ic>
              <Ic s={15}><path d="M1 2h22l-8 10v10l-5-2v-8z" fill="#5c8ac0" stroke="#345c90" /><path d="M1 2h22l-2.500 4h-17z" fill="#f3d64a" /></Ic>
              <svg width="15" height="16" viewBox="0 0 15 16"><text x="1" y="10" fontSize="13" fill="#aaa" fontFamily="Open Sans">ε</text><path d="M8.500 8h5v6h-1.500v-5M8.500 8v6h2" fill="none" stroke="#bbb" /></svg>
              <svg width="8" height="4"><path d="M0 0h8L4 4z" fill="#999" /></svg>
              <Ic s={16}><path d="M4 1v20h5M1 2h9M4 11h5" stroke="#888" strokeWidth="1.500" /><path d="M6 7h6v6H6zM6 16h6v6H6z" fill="#f3c14a" stroke="#d47a20" /><path d="M15 1h5v11h4l-6.500 9L11 12h4z" fill="#5c8ac0" stroke="#345c90" /></Ic>
              <Ic s={16}><path d="M4 1v20h5M1 2h9M4 11h5" stroke="#888" strokeWidth="1.500" /><path d="M6 7h6v6H6zM6 16h6v6H6z" fill="#f3c14a" stroke="#d47a20" /><path d="M15 22h5V10h4L17.500 1 11 10h4z" fill="#5c8ac0" stroke="#345c90" /></Ic>
              <Ic s={16}><rect x="2" y="2" width="17" height="17" stroke="#777" strokeWidth="1.500" /><rect x="13" y="15" width="10" height="7" rx="3" fill="#e8434a" /><path d="M15 18.500h6" stroke="#fff" strokeWidth="1.500" /></Ic>
            </DockTools>
            <Tree>
              <Layer $ls={-0.5}><Check on /><Swatch $w={22}><svg width="16" height="16" viewBox="0 0 24 24"><rect x=".5" y=".5" width="23" height="23" fill="#7de975" stroke="#444" /><Pencil c="#e0622c" d="#a03c10" x={1} y={0.500} k={0.920} /></svg></Swatch><u>Buildings</u></Layer>
              <Layer $off><Check /><Swatch $w={22}><svg width="16" height="16"><rect x=".5" y=".5" width="15" height="15" fill="#8d5a99" stroke="#6d4878" /></svg></Swatch>Parks</Layer>
              <Layer $off><Check /><Swatch $w={20}><svg width="14" height="5"><rect width="14" height="5" fill="#ccc" /><rect y="1" width="14" height="3" fill="#ededed" /></svg></Swatch>Roads</Layer>
              <Layer $ls={0.03}><Check on /><Swatch $w={22}><svg width="16" height="14" viewBox="0 0 16 14"><rect x="2" y="1" width="12" height="12" fill="#c9d8ec" /><path d="M2 1h4v4H2zM10 1h4v4h-4zM6 9h4v4H6z" fill="#1f2c44" /><path d="M6 5h4v4H6zM10 9h4v4h-4z" fill="#6282ac" /></svg></Swatch>BX24_GeoTifv1-02-clip</Layer>
            </Tree>
            <Tabs><Tab $w={63}>Browser</Tab><Tab $on $w={56}>Layers</Tab></Tabs>
          </Dock>
          <MapBox><RasterMap /></MapBox>
        </Main>
        <Status>
          <Field $w={200} $muted $ls={-0.52}><svg width="14" height="14" fill="none" stroke="#888" strokeWidth="1.300"><circle cx="5.500" cy="5.500" r="4.500" /><path d="m9 9 4 4" /></svg>Type to locate (Ctrl+K)</Field>
          <Label $ml={104} $w={57} $ls={-0.78}>Coordinate</Label>
          <Field $w={123} $ls={-0.5}>{" "}1569693.4,5180355.5</Field>
          <StatusIcon $ml={4} width="16" height="16" viewBox="0 0 16 16" fill="none" stroke="#333" strokeWidth="1.300"><path d="M2 3c2-3 5-1 6 2l5 5c2 3-2 6-5 4L3 9C1 7 0 5 2 3zM3 7l5-5M5 9l5-5M7 11l4-4M9 13l4-4M12 4l3-2" /></StatusIcon>
          <Label $ml={12} $w={29} $ls={-0.6}>Scale</Label>
          <Field $w={80}>1:1408<FieldEnd $w={19}><i className="dn" /></FieldEnd></Field>
          <StatusIcon $ml={12} width="14" height="16" viewBox="0 0 14 16"><path d="M3.500 8V4.500c0-4 7-4 7 0V8" fill="none" stroke="#999" strokeWidth="1.800" /><rect x="1" y="7" width="12" height="8" rx="1" fill="#595959" /></StatusIcon>
          <Label $ml={7} $w={48} $ls={-0.85}>Magnifier</Label>
          <Field $w={87}>100%<FieldEnd $w={14}><i className="up" /><i className="dn" /></FieldEnd></Field>
          <Label $ml={9} $w={51}>Rotation</Label>
          <Field $w={84}>0.0 °<FieldEnd $w={14}><i className="up" /><i className="dn" /></FieldEnd></Field>
          <Label $ml={6} $w={18}><Check on /></Label>
          <span>Render</span>
        </Status>
      </Window>
      <Menu>
        <MenuHead>Panels</MenuHead>
        {panels.map(t => <Entry key={t} text={t} />)}
        <MenuHead $sep>Toolbars</MenuHead>
        {toolbars.map(t => <Entry key={t} text={t} />)}
      </Menu>
      <RedFrame />
      <Pointer width="14" height="20" viewBox="0 0 14 20"><path d="M1 1v15l3.500-3.300L7 18.500l2.500-1-2.500-5.500h5z" fill="#fff" stroke="#000" /></Pointer>
    </Desktop>
  );
}
